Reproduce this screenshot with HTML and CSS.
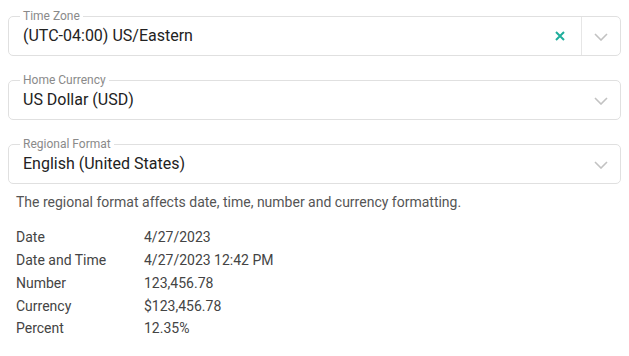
FILE: index.html
```html
<!DOCTYPE html>
<html lang="en">
<head>
    <meta charset="UTF-8">
    <title>Regional Settings</title>
    <link rel="stylesheet" href="styles.css">
</head>
<body>
    <div class="field">
        <span class="field-label">Time Zone</span>
        <div class="field-value">(UTC-04:00) US/Eastern</div>
        <span class="clear">
            <svg width="10" height="10" viewBox="0 0 10 10"><path d="M1 1L9 9M9 1L1 9" stroke="#1fae9c" stroke-width="2" fill="none"/></svg>
        </span>
        <span class="divider"></span>
        <span class="arrow">
            <svg width="14" height="8" viewBox="0 0 14 8"><path d="M1 1L7 7L13 1" stroke="#c2c2c2" stroke-width="1.6" fill="none"/></svg>
        </span>
    </div>

    <div class="field">
        <span class="field-label">Home Currency</span>
        <div class="field-value">US Dollar (USD)</div>
        <span class="arrow">
            <svg width="14" height="8" viewBox="0 0 14 8"><path d="M1 1L7 7L13 1" stroke="#c2c2c2" stroke-width="1.6" fill="none"/></svg>
        </span>
    </div>

    <div class="field field-last">
        <span class="field-label">Regional Format</span>
        <div class="field-value">English (United States)</div>
        <span class="arrow">
            <svg width="14" height="8" viewBox="0 0 14 8"><path d="M1 1L7 7L13 1" stroke="#c2c2c2" stroke-width="1.6" fill="none"/></svg>
        </span>
    </div>

    <p class="hint">The regional format affects date, time, number and currency formatting.</p>

    <div class="preview">
        <span>Date</span><span>4/27/2023</span>
        <span>Date and Time</span><span>4/27/2023 12:42 PM</span>
        <span>Number</span><span>123,456.78</span>
        <span>Currency</span><span>$123,456.78</span>
        <span>Percent</span><span>12.35%</span>
    </div>
</body>
</html>
```

FILE: styles.css
```css
body {
    margin: 8px;
    font-family: Roboto, "Liberation Sans", sans-serif;
    background: #fff;
    color: #222;
}
.field {
    position: relative;
    display: flex;
    align-items: center;
    height: 40px;
    box-sizing: border-box;
    margin-top: 8px;
    margin-bottom: 24px;
    border: 1px solid #e0e0e0;
    border-radius: 5px;
}
.field-last {
    margin-bottom: 0;
}
.field-label {
    position: absolute;
    top: -9px;
    left: 11px;
    padding: 0 3px;
    background: #fff;
    font-size: 12px;
    line-height: 16px;
    color: #8a8a8a;
}
.field-value {
    flex: 1;
    padding-left: 14px;
    font-size: 16px;
    line-height: 19px;
    margin-top: -1px;
}
.clear {
    display: flex;
    width: 22px;
    justify-content: center;
    margin-right: 10px;
}
.divider {
    align-self: stretch;
    width: 1px;
    background: #e6e6e6;
}
.arrow {
    display: flex;
    width: 38px;
    justify-content: center;
    padding-top: 1px;
}
.hint {
    margin: 9px 0 0 8px;
    font-size: 14px;
    line-height: 18px;
    color: #555;
}
.preview {
    display: grid;
    grid-template-columns: 128px auto;
    grid-auto-rows: 22.75px;
    align-items: center;
    margin: 15px 0 0 8px;
    font-size: 14px;
    color: #444;
}
```
